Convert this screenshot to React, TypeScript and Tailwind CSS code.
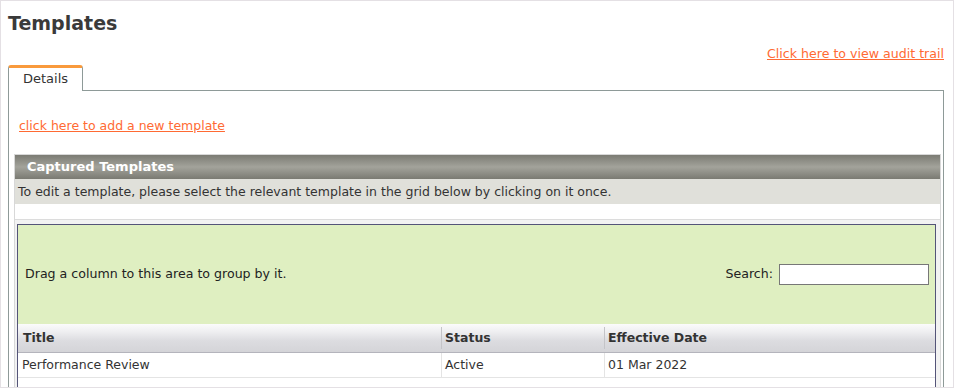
import React from "react";

const rows = [{ title: "Performance Review", status: "Active", date: "01 Mar 2022" }];

const App = () => {
  return (
    <div className="h-[388px] w-[954px] overflow-hidden border border-[#e4e0e4] bg-white font-['DejaVu_Sans',sans-serif] text-[12px] text-[#333]">
      <div className="pl-[7px] pr-[9px]">
        <h1 className="pt-[9px] text-[19px] font-bold leading-[26px] text-[#3a3a3a]">Templates</h1>
        <div className="mt-[10px] flex justify-end">
          <a href="#" className="text-[12.6px] leading-[16px] text-[#ff6a33] underline">
            Click here to view audit trail
          </a>
        </div>

        {/* tab strip */}
        <div className="mt-[3px] flex">
          <div className="relative -mb-px w-[75px] rounded-t-[3px] border border-b-0 border-[#8e9a98] border-t-[3px] border-t-[#f99a3c] bg-white pb-[3px] pt-[2px] text-center text-[13px] leading-[18px] text-[#333]">
            Details
          </div>
        </div>

        <div className="border border-[#8e9a98] pb-4 pl-[5px] pr-[2px]">
          <div className="pl-[5px] pt-[26px]">
            <a href="#" className="text-[12.5px] leading-[16px] text-[#ff6a33] underline">
              click here to add a new template
            </a>
          </div>

          <div className="mt-[19px] border border-[#d8d8d8]">
            <div className="bg-[linear-gradient(#7b7b73,#a3a39b_50%,#7a7a72)] pl-[12px] text-[13px] font-bold leading-[24px] text-white">
              Captured Templates
            </div>
            <div className="bg-[#e0e0da] pl-[3px] text-[12.5px] leading-[25px] text-[#333]">
              To edit a template, please select the relevant template in the grid below by clicking on it once.
            </div>
            <div className="h-[16px] border-b border-[#dcdcdc] bg-white" />
            <div className="bg-[#f2f2f2] pl-[2px] pr-[4px] pt-[4px]">
              <div className="border border-[#545478] bg-white">
                <div className="flex h-[99px] items-center justify-between bg-[#dfefc1] pl-[7px] pr-[6px]">
                  <span className="text-[12.6px] text-[#222]">Drag a column to this area to group by it.</span>
                  <label className="flex items-center gap-[6px] text-[12.6px] text-[#222]">
                    Search:
                    <input className="h-[21px] w-[150px] border border-[#777] bg-white" />
                  </label>
                </div>
                <div className="flex h-[29px] border-b border-[#b4b4bc] bg-[linear-gradient(#fbfbfb,#f0f0f2_25%,#dcdce0_60%,#d4d4d8)] text-[12.5px] font-bold text-[#333]">
                  <div className="flex w-[423px] items-center pl-[5px]">Title</div>
                  <div className="my-[3px] flex w-[163px] items-center border-l border-[#c4c4c8] pl-[3px]">Status</div>
                  <div className="my-[3px] flex flex-1 items-center border-l border-[#c4c4c8] pl-[3px]">Effective Date</div>
                </div>
                {rows.map((r, i) => (
                  <div key={i} className="flex h-[25px] border-b border-[#e4e4e4] text-[12.5px] text-[#333]">
                    <div className="flex w-[423px] items-center pl-[4px]">{r.title}</div>
                    <div className="flex w-[163px] items-center border-l border-[#e4e4e4] pl-[3px]">{r.status}</div>
                    <div className="flex flex-1 items-center border-l border-[#e4e4e4] pl-[3px]">{r.date}</div>
                  </div>
                ))}
                <div className="h-[30px]" />
              </div>
            </div>
          </div>
        </div>
      </div>
    </div>
  );
};

export default App;
